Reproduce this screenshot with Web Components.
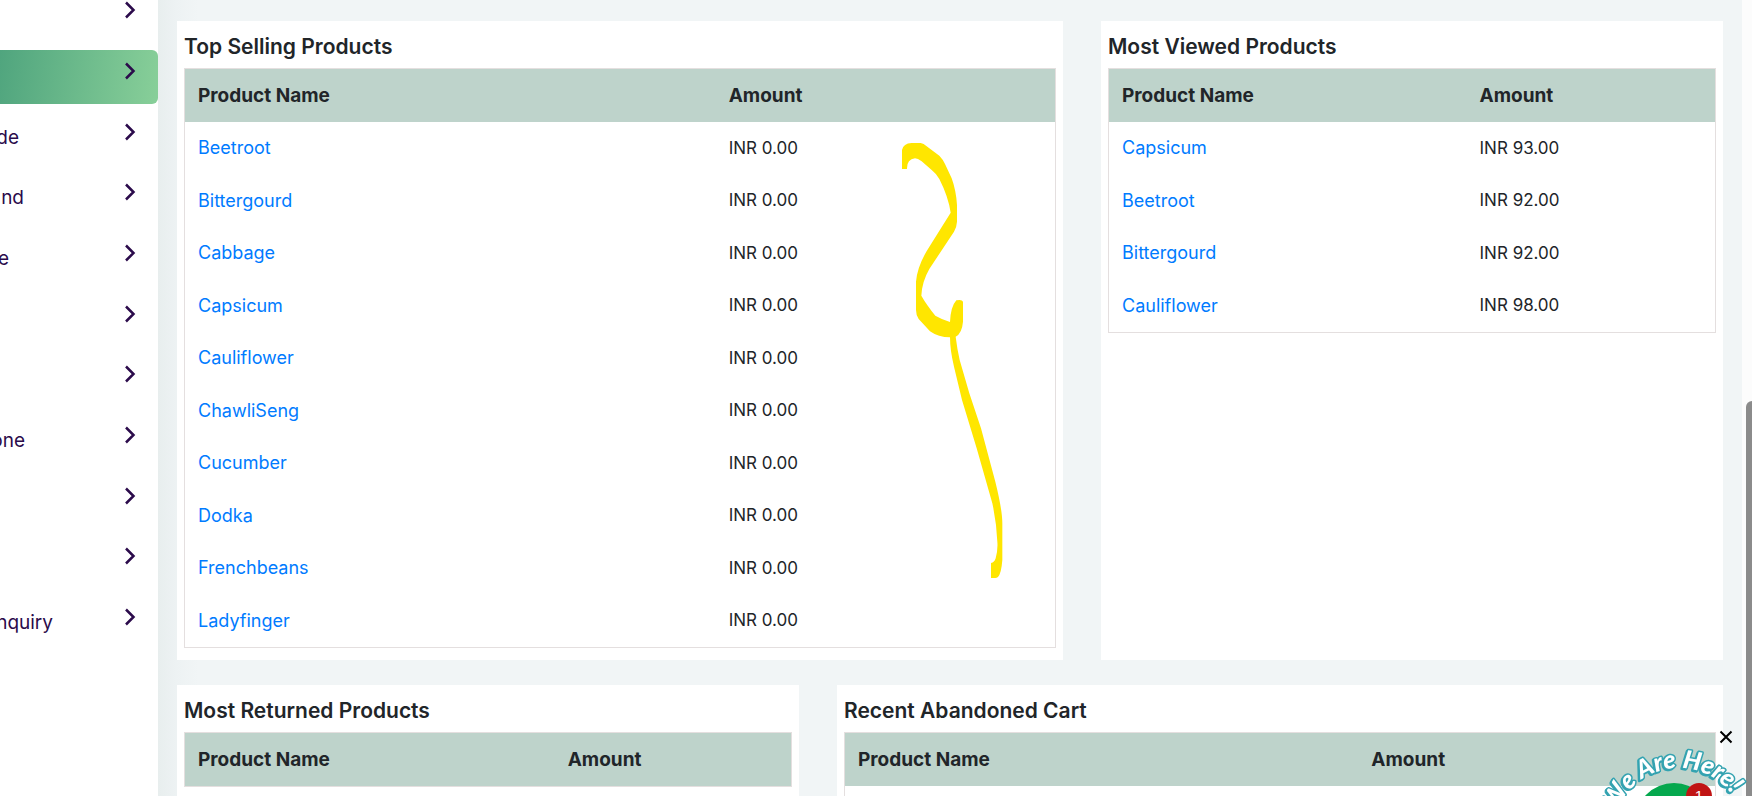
<!DOCTYPE html>
<html lang="en">
<head>
<meta charset="utf-8">
<title>Dashboard</title>
<style>
  html, body { margin: 0; height: 100%; overflow: hidden; }
  body { font-family: Inter, "Noto Sans", sans-serif; color: #212529; background: #fff; }
</style>
</head>
<body>
<dash-page>
  <side-nav slot="nav">
    <nav-item></nav-item>
    <nav-item active></nav-item>
    <nav-item style="--label:19px">de</nav-item>
    <nav-item style="--label:24px">nd</nav-item>
    <nav-item style="--label:9px">e</nav-item>
    <nav-item></nav-item>
    <nav-item></nav-item>
    <nav-item style="--label:25px">one</nav-item>
    <nav-item></nav-item>
    <nav-item></nav-item>
    <nav-item style="--label:53px">nquiry</nav-item>
  </side-nav>

  <product-card class="wide" heading="Top Selling Products" split="61"
    rows="Beetroot|INR 0.00;Bittergourd|INR 0.00;Cabbage|INR 0.00;Capsicum|INR 0.00;Cauliflower|INR 0.00;ChawliSeng|INR 0.00;Cucumber|INR 0.00;Dodka|INR 0.00;Frenchbeans|INR 0.00;Ladyfinger|INR 0.00"></product-card>
  <product-card heading="Most Viewed Products" split="59"
    rows="Capsicum|INR 93.00;Beetroot|INR 92.00;Bittergourd|INR 92.00;Cauliflower|INR 98.00"></product-card>
  <product-card heading="Most Returned Products" split="61"></product-card>
  <product-card class="wide" heading="Recent Abandoned Cart" split="59" rows="|"></product-card>

  <pen-mark slot="overlay"></pen-mark>
  <chat-widget slot="overlay"></chat-widget>
</dash-page>

<template id="dash-page">
  <style>
    :host { display: flex; height: 100vh; overflow: hidden; }
    main { flex: 1; min-width: 0; position: relative; box-sizing: border-box; padding-top: 21px;
      background: linear-gradient(90deg, #e8eeee 0, #edf2f3 18px, #f1f5f6 40px); }
    .grid { display: grid; grid-template-columns: repeat(12, 1fr); row-gap: 25px; }
    ::slotted(product-card) { grid-column: span 5; margin: 0 19px; }
    ::slotted(product-card.wide) { grid-column: span 7; }
    .track { flex: 0 0 10px; display: flex; justify-content: flex-end; background: #fcfcfc; }
    .thumb { width: 6px; margin-top: 401px; background: #8b8b8b; border-radius: 6px 0 0 0; }
  </style>
  <slot name="nav"></slot>
  <main>
    <div class="grid"><slot></slot></div>
    <slot name="overlay"></slot>
  </main>
  <div class="track"><div class="thumb"></div></div>
</template>

<template id="side-nav">
  <style>
    :host { display: block; flex: 0 0 158px; overflow: hidden; background: #fff; }
    nav { display: flex; flex-direction: column; margin-top: -11px; }
    ::slotted(nav-item) { height: 61px; }
    ::slotted(nav-item:nth-child(3n)) { height: 60px; }
  </style>
  <nav aria-label="Main"><slot></slot></nav>
</template>

<template id="nav-item">
  <style>
    :host { display: block; }
    a { display: flex; justify-content: space-between; height: 54px; padding-right: 22px;
      border-radius: 0 6px 6px 0; color: #2b0b4b; text-decoration: none; font-size: 19px; line-height: 54px; }
    :host([active]) a { background: linear-gradient(97deg, #50a57e, #88cf99); }
    .label { display: flex; justify-content: flex-end; width: var(--label, 0); overflow: hidden; white-space: nowrap; }
    svg { width: 12px; height: 18px; margin-top: 12px; fill: none; stroke: #2b0b4b; stroke-width: 2.500; }
  </style>
  <a href="#"><span class="label"><slot></slot></span>
    <svg viewBox="0 0 12 18" aria-hidden="true"><path d="M2 1.500 9.500 9 2 16.500"/></svg></a>
</template>

<template id="product-card">
  <style>
    :host { display: block; box-sizing: border-box; background: #fff; padding: 10px 7px 12px; }
    h2 { margin: 0 0 5px; font-size: 21px; font-weight: 600; line-height: 32px; white-space: nowrap; }
    table { width: 100%; table-layout: fixed; border: 1px solid #e4dfdf; border-spacing: 0; }
    th, td { box-sizing: border-box; padding: 0 13px; text-align: left; white-space: nowrap; }
    th { height: 53px; background: #bed3cb; font-size: 19px; font-weight: 700; }
    td { height: 53px; padding-bottom: 2px; font-size: 17px; }
    tbody tr:nth-child(even) td { height: 52px; }
    a { color: #007bff; text-decoration: none; font-size: 18px; }
  </style>
  <h2></h2>
  <table>
    <colgroup><col><col></colgroup>
    <thead><tr><th scope="col">Product Name</th><th scope="col">Amount</th></tr></thead>
    <tbody></tbody>
  </table>
</template>

<template id="pen-mark">
  <style>
    :host { position: absolute; left: 742px; top: 140px; pointer-events: none; }
    svg { display: block; width: 107px; height: 440px; }
  </style>
  <svg viewBox="60 60 321 1320" aria-hidden="true"><path fill="#ffe600" d="M66 147V90Q70 70 95 69H122Q132 71 138 77L178 107Q188 117 195 132L215 175Q228 210 231 255V305Q230 322 222 335L148 447Q126 485 124 527Q140 555 166 587Q185 598 210 606Q212 560 229 541Q246 537 249 545V605Q246 640 227 650Q232 690 239 720L268 820L303 925L346 1085Q367 1170 367 1210V1320Q364 1360 354 1371Q350 1374 346 1374H333V1329Q343 1328 347 1315Q354 1290 352 1265Q350 1210 337 1150L290 985L246 840L222 740Q210 690 210 652Q175 652 150 634L116 597Q108 585 108 570V485Q112 435 150 377L212 278Q205 230 178 177Q168 160 155 150L125 124Q113 115 105 115Q80 118 81 147Z"/></svg>
</template>

<template id="chat-widget">
  <style>
    :host { position: fixed; right: 0; bottom: 0; width: 152px; height: 70px; overflow: hidden; }
    button { position: absolute; padding: 0; border: 0; background: none; }
    .close { left: 118px; top: 3px; width: 16px; height: 16px; }
    .close svg { display: block; width: 16px; height: 16px; stroke: #000; stroke-width: 2; }
    .chat { left: 35px; top: 57px; width: 78px; height: 78px; border-radius: 50%; background: #05a84e; }
    .badge { position: absolute; left: 51px; top: 0; width: 26px; height: 26px; border-radius: 50%;
      background: #c01414; color: #fff; font: 15px/26px "Liberation Sans", sans-serif; text-align: center; }
    .arc { position: absolute; left: 0; top: 0; width: 152px; height: 70px; pointer-events: none; }
    .arc text { font: italic 900 25px Lato, sans-serif; fill: #fff; stroke: #34a3b1; stroke-width: 3;
      stroke-linejoin: round; paint-order: stroke; filter: drop-shadow(-1px 1px 0 #34a3b1); }
  </style>
  <button class="chat" aria-label="Open chat"><span class="badge">1</span></button>
  <svg class="arc" viewBox="0 0 152 70">
    <path id="curve" fill="none" d="M13 108A66 66 0 0 1 145 108"/>
    <text text-anchor="end"><textPath href="#curve" startOffset="164">We Are Here!</textPath></text>
  </svg>
  <button class="close" aria-label="Close"><svg viewBox="0 0 16 16"><path d="M2.500 2.500 13.500 13.500M13.500 2.500 2.500 13.500"/></svg></button>
</template>

<script>
  class Base extends HTMLElement {
    constructor() {
      super();
      const tpl = document.getElementById(this.localName);
      this.attachShadow({ mode: "open" }).append(tpl.content.cloneNode(true));
    }
  }
  class ProductCard extends Base {
    connectedCallback() {
      const root = this.shadowRoot;
      root.querySelector("h2").textContent = this.getAttribute("heading");
      root.querySelector("col").style.width = this.getAttribute("split") + "%";
      const body = root.querySelector("tbody");
      body.replaceChildren();
      for (const row of (this.getAttribute("rows") || "").split(";").filter(Boolean)) {
        const [name, amount] = row.split("|");
        const tr = body.insertRow();
        const cell = tr.insertCell();
        if (name) {
          const a = document.createElement("a");
          a.href = "#";
          a.textContent = name;
          cell.append(a);
        }
        tr.insertCell().textContent = amount;
      }
    }
  }
  customElements.define("dash-page", class extends Base {});
  customElements.define("side-nav", class extends Base {});
  customElements.define("nav-item", class extends Base {});
  customElements.define("product-card", ProductCard);
  customElements.define("pen-mark", class extends Base {});
  customElements.define("chat-widget", class extends Base {});
</script>
</body>
</html>
